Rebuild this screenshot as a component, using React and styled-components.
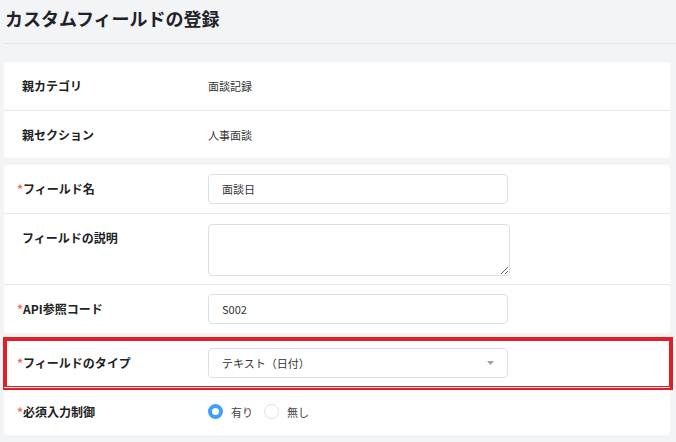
import React from "react";
import styled, { createGlobalStyle } from "styled-components";

const GlobalStyle = createGlobalStyle`
  body {
    margin: 0;
    background: #f3f4f6;
    font-family: "Noto Sans CJK JP", "Noto Sans", sans-serif;
    color: #303133;
  }
`;

const Page = styled.div`
  padding: 0 6px 0 4px;
`;

const Header = styled.header`
  padding: 5px 0 12px 1px;
  border-bottom: 1px solid #e2e4e8;
  margin-right: -6px;
`;

const Title = styled.h1`
  margin: 0;
  font-size: 18px;
  line-height: 26px;
  font-weight: 700;
  color: #1f2329;
`;

const Card = styled.section`
  position: relative;
  background: #fff;
  border-radius: 3px;
  margin-top: ${props => props.$top || 6}px;
`;

const Row = styled.div`
  position: relative;
  display: grid;
  grid-template-columns: 186px 1fr;
  align-items: ${props => (props.$top ? "start" : "center")};
  height: ${props => props.$height || 48}px;
  padding: 0 18px;
  box-sizing: border-box;
  & + & {
    border-top: 1px solid #e6e8eb;
  }
`;

const Label = styled.div`
  font-size: 12px;
  font-weight: 700;
  color: #222;
  line-height: ${props => (props.$top ? "30px" : "18px")};
  padding-top: ${props => (props.$top ? 9 : 0)}px;
`;

const Star = styled.span`
  color: #f56c6c;
  font-weight: 700;
  margin-left: -5px;
`;

const Value = styled.div`
  font-size: 11px;
  color: #333;
`;

const Input = styled.div`
  width: 300px;
  height: 30px;
  box-sizing: border-box;
  border: 1px solid #dcdfe6;
  border-radius: 4px;
  padding: 0 13px;
  display: flex;
  align-items: center;
  justify-content: space-between;
  font-size: 11px;
  color: #333;
  background: #fff;
`;

const TextArea = styled.textarea`
  display: block;
  width: 302px;
  height: 52px;
  margin-top: 10px;
  box-sizing: border-box;
  border: 1px solid #dcdfe6;
  border-radius: 4px;
  resize: vertical;
  font-family: inherit;
  outline: none;
`;

const Highlight = styled.div`
  position: absolute;
  left: -1px;
  right: -3px;
  top: -2px;
  bottom: -3px;
  border: 4px solid #e21f26;
  pointer-events: none;
`;

const Radios = styled.div`
  display: flex;
  align-items: center;
  gap: 11px;
`;

const RadioItem = styled.label`
  display: flex;
  align-items: center;
  gap: 8px;
  font-size: 11px;
  color: #444;
`;

const RadioDot = styled.span`
  width: 15px;
  height: 15px;
  box-sizing: border-box;
  border-radius: 50%;
  background: #fff;
  border: ${props => (props.$on ? "4px solid #409eff" : "1px solid #dcdfe6")};
`;

const Caret = () => (
  <svg width="7" height="4" viewBox="0 0 7 4">
    <path d="M0 0h7L3.5 4z" fill="#9aa0a8" />
  </svg>
);

export default function App() {
  return (
    <Page>
      <GlobalStyle />
      <Header>
        <Title>カスタムフィールドの登録</Title>
      </Header>

      <Card $top={18}>
        <Row>
          <Label>親カテゴリ</Label>
          <Value>面談記録</Value>
        </Row>
        <Row>
          <Label>親セクション</Label>
          <Value>人事面談</Value>
        </Row>
      </Card>

      <Card $top={7}>
        <Row>
          <Label>
            <Star>*</Star>フィールド名
          </Label>
          <Input>面談日</Input>
        </Row>
        <Row $top $height={71}>
          <Label $top>フィールドの説明</Label>
          <TextArea />
        </Row>
        <Row $height={49}>
          <Label>
            <Star>*</Star>API参照コード
          </Label>
          <Input>S002</Input>
        </Row>
      </Card>

      <Card>
        <Row>
          <Label>
            <Star>*</Star>フィールドのタイプ
          </Label>
          <Input>
            テキスト（日付）
            <Caret />
          </Input>
          <Highlight />
        </Row>
        <Row>
          <Label>
            <Star>*</Star>必須入力制御
          </Label>
          <Radios>
            <RadioItem>
              <RadioDot $on />
              有り
            </RadioItem>
            <RadioItem>
              <RadioDot />
              無し
            </RadioItem>
          </Radios>
        </Row>
      </Card>
    </Page>
  );
}
